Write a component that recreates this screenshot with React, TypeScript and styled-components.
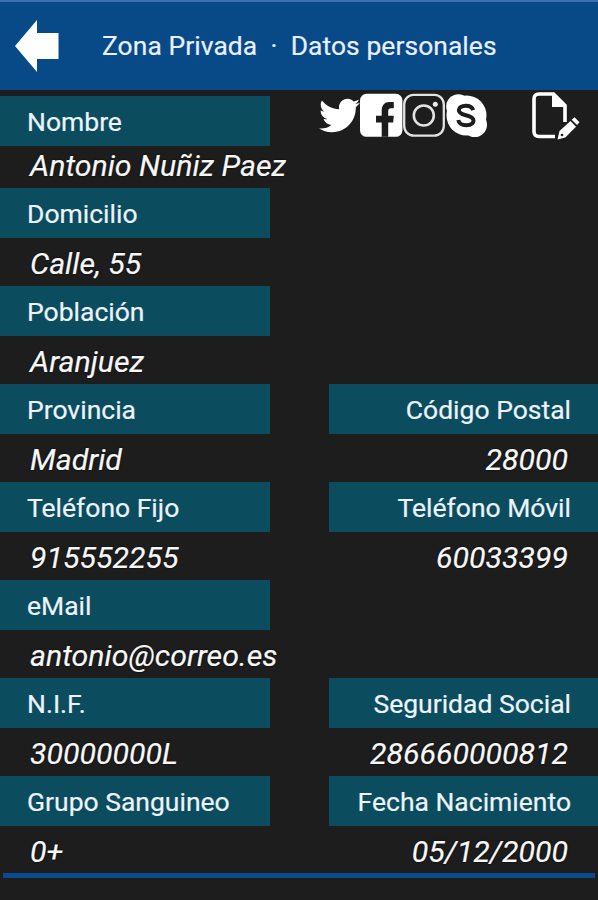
import React from "react";
import styled, { createGlobalStyle } from "styled-components";
import { FaTwitter } from "react-icons/fa";

const GlobalStyle = createGlobalStyle`
  * { box-sizing: border-box; }
  body { margin: 0; background: #1d1d1d; font-family: Roboto, "Liberation Sans", sans-serif; }
`;

const Screen = styled.main`
  width: 598px;
  height: 900px;
  overflow: hidden;
  display: flex;
  flex-direction: column;
  background: #1d1d1d;
`;

const TopBar = styled.header`
  flex: none;
  height: 90px;
  display: flex;
  align-items: center;
  padding: 0 0 0 14px;
  background: #084a88;
  border-top: 2px solid #3872ae;
`;

const BackButton = styled.button`
  width: 46px;
  height: 52px;
  padding: 0;
  border: 0;
  background: none;
  color: #fff;
  svg { display: block; }
`;

const Title = styled.h1`
  margin: 0 0 0 42px;
  font-size: 26.4px;
  font-weight: 400;
  line-height: 32px;
  letter-spacing: 0.08px;
  white-space: pre;
  color: #e9f0ff;
  -webkit-text-stroke: 0.2px currentColor;
`;

const Form = styled.section`
  flex: none;
  display: grid;
  grid-template-columns: 270px 269px;
  column-gap: 59px;
  grid-template-rows: 92.2px repeat(7, 97.9px);
  padding-top: 6px;
`;

const Field = styled.div<{ $right?: boolean }>`
  grid-column: ${(p) => (p.$right ? 2 : 1)};
  display: flex;
  flex-direction: column;
  text-align: ${(p) => (p.$right ? "right" : "left")};
`;

const Label = styled.div`
  flex: none;
  height: 50px;
  padding: 1px 27px 0;
  line-height: 50px;
  font-size: 26.5px;
  white-space: nowrap;
  background: #0b4c5e;
  color: #edf3fb;
  -webkit-text-stroke: 0.2px currentColor;
`;

const Value = styled.div<{ $raised?: boolean }>`
  flex: 1;
  padding: ${(p) => (p.$raised ? 3 : 9)}px 30px 0;
  font-size: 30.3px;
  font-style: italic;
  line-height: 34px;
  white-space: nowrap;
  color: #f7f7f7;
  text-shadow: 0 0 2px #000;
  -webkit-text-stroke: 0.2px currentColor;
`;

const Actions = styled.nav`
  grid-column: 2;
  grid-row: 1;
  height: 50px;
  display: flex;
  align-items: flex-start;
  margin-left: -10px;
  margin-top: -3px;
  color: #fff;
  svg { display: block; flex: none; }
`;

const TwitterMark = styled(FaTwitter)`
  margin-top: 2px;
`;

const EditButton = styled.button`
  margin: -1px 0 0 43px;
  padding: 0;
  border: 0;
  background: none;
  color: #fff;
`;

const Divider = styled.hr`
  flex: none;
  width: 592px;
  height: 5px;
  margin: 0 0 0 3px;
  border: 0;
  background: #084a8c;
`;

type FieldData = { label: string; value: string; right?: boolean; raised?: boolean };

const fields: FieldData[] = [
  { label: "Domicilio", value: "Calle, 55" },
  { label: "Población", value: "Aranjuez" },
  { label: "Provincia", value: "Madrid" },
  { label: "Código Postal", value: "28000", right: true },
  { label: "Teléfono Fijo", value: "915552255" },
  { label: "Teléfono Móvil", value: "60033399", right: true },
  { label: "eMail", value: "antonio@correo.es" },
  { label: "N.I.F.", value: "30000000L" },
  { label: "Seguridad Social", value: "286660000812", right: true },
  { label: "Grupo Sanguineo", value: "0+" },
  { label: "Fecha Nacimiento", value: "05/12/2000", right: true },
];

function DataField({ label, value, right, raised }: FieldData) {
  return (
    <Field $right={right}>
      <Label>{label}</Label>
      <Value $raised={raised}>{value}</Value>
    </Field>
  );
}

const BackArrow = () => (
  <svg width="46" height="52" viewBox="0 0 46 52" fill="currentColor">
    <path d="M1 26 L23 0 V13 H44.5 V39 H23 V52 Z" />
  </svg>
);

const Facebook = () => (
  <svg width="43" height="44" viewBox="0 0 43 44">
    <rect x="0" y="0.8" width="42.4" height="43" rx="6.5" fill="#fff" />
    <path d="M21.7 43.8V29.5H16V22.7H21.7V17.5C21.7 12 24.7 8.9 29.5 8.9H33.8V15.2H31C29 15.2 28.2 16.3 28.2 18.2V22.7H33.8L33.2 29.5H28.2V43.8Z" fill="#1d1d1d" />
  </svg>
);

const Instagram = () => (
  <svg width="42" height="44" viewBox="0 0 42 44" fill="none" stroke="#e2e2e2" strokeWidth="2.3">
    <rect x="1.2" y="1.8" width="39.6" height="40.8" rx="9.5" />
    <circle cx="20.8" cy="22.5" r="10" strokeWidth="2.6" />
    <circle cx="32.3" cy="11.2" r="2.5" fill="#eee" stroke="none" />
  </svg>
);

const Skype = () => (
  <svg width="43" height="45" viewBox="0 0 43 45">
    <g fill="#fff">
      <circle cx="21.5" cy="22.5" r="20" />
      <circle cx="13.5" cy="13.5" r="12.3" />
      <circle cx="29.7" cy="31.7" r="12.3" />
    </g>
    <path d="M28.2 17.2C27.2 14 24.7 12.7 20.8 12.7C16.8 12.7 13.8 14.4 13.8 17.2C13.8 20.1 16.5 21.1 20.8 22.2C25.5 23.3 28.5 24.4 28.5 27.6C28.5 30.6 25.6 32.2 21.4 32.2C17 32.2 13.9 30.5 13.3 27" fill="none" stroke="#1d1d1d" strokeWidth="4" />
  </svg>
);

const EditPage = () => (
  <svg width="50" height="49" viewBox="0 0 50 49">
    <path d="M24 44.5H8Q3 44.5 3 39.5V7Q3 2 8 2H22.5L34 13.5V30" fill="none" stroke="#fff" strokeWidth="3.6" />
    <path d="M21 1L35 15H21Z" fill="#fff" />
    <path d="M26.5 47.5L28.5 39L39.5 29L45 34.7L34.3 45.5Z" fill="#fff" />
    <path d="M40.7 27.8L43.5 25.3L48.5 30.2L46 33Z" fill="#fff" />
    <circle cx="31" cy="43" r="1.3" fill="#1d1d1d" />
  </svg>
);

export default function App() {
  return (
    <>
      <GlobalStyle />
      <Screen>
        <TopBar>
          <BackButton aria-label="Volver"><BackArrow /></BackButton>
          <Title>{"Zona Privada  ·  Datos personales"}</Title>
        </TopBar>
        <Form>
          <DataField label="Nombre" value="Antonio Nuñiz Paez" raised />
          <Actions>
            <TwitterMark size={41} />
            <Facebook />
            <Instagram />
            <Skype />
            <EditButton aria-label="Editar"><EditPage /></EditButton>
          </Actions>
          {fields.map((f) => <DataField key={f.label} {...f} />)}
        </Form>
        <Divider />
      </Screen>
    </>
  );
}
